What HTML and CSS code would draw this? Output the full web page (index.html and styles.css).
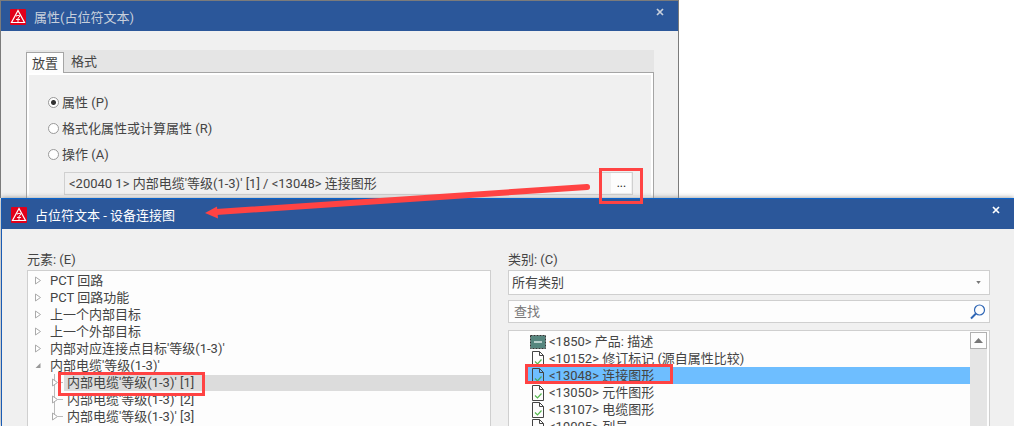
FILE: index.html
```html
<!DOCTYPE html>
<html lang="zh-CN">
<head>
<meta charset="utf-8">
<title>占位符文本 - 设备连接图</title>
<link rel="stylesheet" href="styles.css">
</head>
<body>
<svg class="defs" aria-hidden="true">
  <symbol id="logo" viewBox="0 0 16 16">
    <rect width="16" height="16" rx="1" fill="#e2001a"/>
    <path d="M8 1.500 1.500 13.500h13z" fill="none" stroke="#fff" stroke-width="1.200"/>
    <path d="M6.500 7.500V6.500h3v1.500L8 9v4M6 10.500h4" fill="none" stroke="#fff" stroke-width=".9"/>
  </symbol>
  <symbol id="cross" viewBox="0 0 8 8"><path d="M1 1l6 6M7 1 1 7" fill="none" stroke="currentColor" stroke-width="1.700"/></symbol>
  <symbol id="closed" viewBox="0 0 8 9"><path d="M1.500 1v7l5-3.500z" fill="#fff" stroke="#aaa"/></symbol>
  <symbol id="open" viewBox="0 0 8 9"><path d="M6.500 2v5h-5z" fill="#999"/></symbol>
  <symbol id="doc" viewBox="0 0 16 16">
    <path d="M2.500.5h7l4 4v11h-11zM9.500.5v4h4" fill="#fdfdfd" stroke="#444"/>
    <path d="M5 10.500l2.500 2.500 4-4.500" fill="none" stroke="#55b84d" stroke-width="1.200"/>
  </symbol>
  <symbol id="doc-current" viewBox="0 0 16 16">
    <path d="M2.500.5h7l4 4v11h-11zM9.500.5v4h4" fill="none" stroke="#444"/>
    <path d="M5 10.500l2.500 2.500 4-4.500" fill="none" stroke="#45a860" stroke-width="1.200"/>
  </symbol>
  <symbol id="block" viewBox="0 0 16 14">
    <rect x=".5" y=".5" width="15" height="13" fill="#56867e" stroke="#333" stroke-dasharray="2 1"/>
    <path d="M4 7h8" stroke="#b9d0cc" stroke-width="2"/>
  </symbol>
</svg>

<section class="dialog dialog-back">
  <header class="title">
    <svg class="logo"><use href="#logo"/></svg>
    <h1>属性(占位符文本)</h1>
    <button class="close" aria-label="关闭"><svg><use href="#cross"/></svg></button>
  </header>
  <div class="tabs" role="tablist">
    <button class="tab active" role="tab" aria-selected="true">放置</button>
    <button class="tab" role="tab" aria-selected="false">格式</button>
  </div>
  <div class="panel">
    <label class="choice"><input type="radio" name="mode" checked>属性 (P)</label>
    <label class="choice"><input type="radio" name="mode">格式化属性或计算属性 (R)</label>
    <label class="choice"><input type="radio" name="mode">操作 (A)</label>
    <div class="field">
      <input type="text" aria-label="操作" readonly value="&lt;20040 1&gt; 内部电缆'等级(1-3)' [1] / &lt;13048&gt; 连接图形">
      <button class="browse">...</button>
    </div>
  </div>
</section>

<section class="dialog dialog-front">
  <header class="title">
    <svg class="logo"><use href="#logo"/></svg>
    <h1>占位符文本 - 设备连接图</h1>
    <button class="close" aria-label="关闭"><svg><use href="#cross"/></svg></button>
  </header>
  <div class="columns">
    <div class="column">
      <div class="caption" id="elements">元素: (E)</div>
      <ul class="box tree" aria-labelledby="elements">
        <li><svg class="arrow"><use href="#closed"/></svg>PCT 回路</li>
        <li><svg class="arrow"><use href="#closed"/></svg>PCT 回路功能</li>
        <li><svg class="arrow"><use href="#closed"/></svg>上一个内部目标</li>
        <li><svg class="arrow"><use href="#closed"/></svg>上一个外部目标</li>
        <li><svg class="arrow"><use href="#closed"/></svg>内部对应连接点目标'等级(1-3)'</li>
        <li><svg class="arrow"><use href="#open"/></svg>内部电缆'等级(1-3)'</li>
        <li class="child"><svg class="arrow"><use href="#closed"/></svg><span class="name selected">内部电缆'等级(1-3)' [1]</span></li>
        <li class="child"><svg class="arrow"><use href="#closed"/></svg><span class="name">内部电缆'等级(1-3)' [2]</span></li>
        <li class="child"><svg class="arrow"><use href="#closed"/></svg><span class="name">内部电缆'等级(1-3)' [3]</span></li>
      </ul>
    </div>
    <div class="column">
      <label class="caption" for="category">类别: (C)</label>
      <div class="combo">
        <select id="category"><option>所有类别</option></select>
        <svg viewBox="0 0 6 4"><path d="M0 0h6L3 4z" fill="#777"/></svg>
      </div>
      <div class="search">
        <input type="search" placeholder="查找" aria-label="查找">
        <svg viewBox="0 0 16 16"><circle cx="9.500" cy="6" r="5" fill="none" stroke="#2f66b5" stroke-width="1.200"/><path d="M6 9.500 1 14.500" stroke="#2f66b5" stroke-width="2"/></svg>
      </div>
      <div class="box results">
        <ul>
          <li><svg class="block"><use href="#block"/></svg>&lt;1850&gt; 产品: 描述</li>
          <li><svg><use href="#doc"/></svg>&lt;10152&gt; 修订标记 (源自属性比较)</li>
          <li class="current"><svg><use href="#doc-current"/></svg>&lt;13048&gt; 连接图形</li>
          <li><svg><use href="#doc"/></svg>&lt;13050&gt; 元件图形</li>
          <li><svg><use href="#doc"/></svg>&lt;13107&gt; 电缆图形</li>
          <li><svg><use href="#doc"/></svg>&lt;19005&gt; 列号</li>
        </ul>
        <div class="scrollbar"><button aria-label="向上滚动"><svg viewBox="0 0 9 5"><path d="M0 5h9L4.500 0z" fill="#777"/></svg></button></div>
      </div>
    </div>
  </div>
</section>

<svg class="marks" width="1014" height="426" aria-hidden="true">
  <g fill="none" stroke="#ff4343" stroke-width="3">
    <path d="M600.500 169.500h41v33h-41z"/>
    <path d="M59.500 373.500h144v21h-144z"/>
    <path d="M526.500 365.500h145v17h-145z"/>
  </g>
  <path d="M587 187 216 212" stroke="#ff4343" stroke-width="6" stroke-linecap="round"/>
  <path d="M205 213 217 206.500 218 218.500z" fill="#ff4343"/>
</svg>
</body>
</html>
```
FILE: styles.css
```css
* { box-sizing: border-box; }

body {
  display: flex;
  flex-direction: column;
  height: 100vh;
  margin: 0;
  overflow: hidden;
  background: #fff;
  color: #444;
  font: 13px/17px Roboto, "Noto Sans CJK SC", sans-serif;
}

button, input, select { margin: 0; padding: 0; border: 0; border-radius: 0; background: none; color: inherit; font: inherit; }
ul { margin: 0; padding: 0; list-style: none; }
svg { flex: none; display: block; }
.defs { position: absolute; width: 0; height: 0; }
.marks { position: absolute; top: 0; left: 0; z-index: 3; pointer-events: none; }

.dialog { background: #f0f0f0; }
.dialog-back { width: 67%; border: 1px solid #7b7b7b; border-bottom: 0; }
.dialog-front {
  z-index: 1;
  display: flex;
  flex: 1;
  flex-direction: column;
  min-height: 0;
  margin-left: 1px;
  border-top: 1px solid #0a64cc;
  border-left: 1px solid #1a5cb4;
  box-shadow: 0 0 5px #888;
}

.title { display: flex; align-items: center; flex: none; height: 30px; padding: 2px 14px 0 9px; background: #2b579a; color: #fff; }
.dialog-back .title { color: #c8d0dc; }
.logo { width: 16px; height: 16px; }
.title h1 { flex: 1; margin: 0 0 0 8px; font-size: 13px; font-weight: 400; }
.close { display: flex; align-self: flex-start; padding: 5px 0; }
.close svg { width: 8px; height: 8px; }

.tabs { display: flex; align-items: flex-end; height: 22px; margin: 19px 24px 0 25px; background: #e5e5e5; }
.tab { height: 22px; padding: 0 7px; }
.tab.active { height: 21px; margin-bottom: -1px; padding: 0 5px; border: 1px solid #a5a5a5; border-bottom: 0; background: #fdfdfd; z-index: 1; }

.panel { margin: 0 24px 0 25px; padding: 16px 18px 3px 21px; border: 1px solid #a5a5a5; border-bottom: 0; box-shadow: inset 0 0 0 2px #fff; }
.choice { display: flex; align-items: center; gap: 3px; height: 26px; }
.choice input { width: 11px; height: 11px; border: 1px solid #999; border-radius: 50%; background: #fff; appearance: none; }
.choice input:checked { background: radial-gradient(circle, #333 2px, #fff 3px); }
.field { display: flex; height: 23px; margin: 5px 2px 0 16px; padding: 0 1px 1px; border: 1px solid #d0d0d0; }
.field input { flex: 1; min-width: 0; padding-left: 3px; }
.browse { width: 20px; background: #fdfdfd; color: #222; font-size: 12px; }

.columns { display: grid; grid-template-columns: 464fr 482fr; column-gap: 17px; flex: 1; min-height: 0; padding: 22px 24px 0 25px; }
.column { display: flex; flex-direction: column; min-width: 0; min-height: 0; }
.caption { flex: none; height: 19px; }
.box { flex: 1; min-height: 0; overflow: hidden; border: 1px solid #cfcfcf; border-bottom: 0; background: #fdfdfd; }

.tree { padding: 1px 0; white-space: nowrap; }
.tree li { display: flex; align-items: center; gap: 8px; height: 17px; padding-left: 6px; }
.arrow { width: 8px; height: 9px; }
.tree .child { gap: 1px; padding-left: 23px; background: linear-gradient(#bbb, #bbb) 26px 0 / 1px 100% no-repeat, linear-gradient(#bbb, #bbb) 30px 8px / 5px 1px no-repeat; }
.tree .child:last-child { background-size: 1px 50%, 5px 1px; }
.name { flex: 1; height: 16px; margin-left: 4px; padding-left: 3px; line-height: 16px; }
.selected { background: #dcdcdc; }

.combo, .search { display: flex; flex: none; align-items: center; border: 1px solid #cfcfcf; background: #fdfdfd; }
.combo { height: 25px; padding-right: 8px; }
.combo select { flex: 1; height: 23px; padding-left: 3px; appearance: none; }
.combo svg { width: 5px; height: 3px; }
.search { height: 23px; margin: 5px 0 7px; padding: 0 3px 0 5px; }
.search input { flex: 1; min-width: 0; outline: 0; appearance: none; }
.search input::placeholder { color: #777; opacity: 1; }
.search svg { width: 16px; height: 16px; }

.results { display: flex; }
.results ul { flex: 1; padding: 2px 0 0 19px; white-space: nowrap; }
.results li { display: flex; align-items: center; gap: 3px; height: 17px; padding-left: 2px; }
.results li svg { width: 16px; height: 16px; }
.results .block { height: 14px; }
.results .current { background: #6ebeff; }
.scrollbar { width: 19px; margin-top: 1px; border-right: 2px solid #fdfdfd; background: #e5e5e5; }
.scrollbar button { display: flex; align-items: center; justify-content: center; width: 17px; height: 17px; border: 1px solid #b0b0b0; background: #fdfdfd; }
.scrollbar svg { width: 9px; height: 5px; }
```
